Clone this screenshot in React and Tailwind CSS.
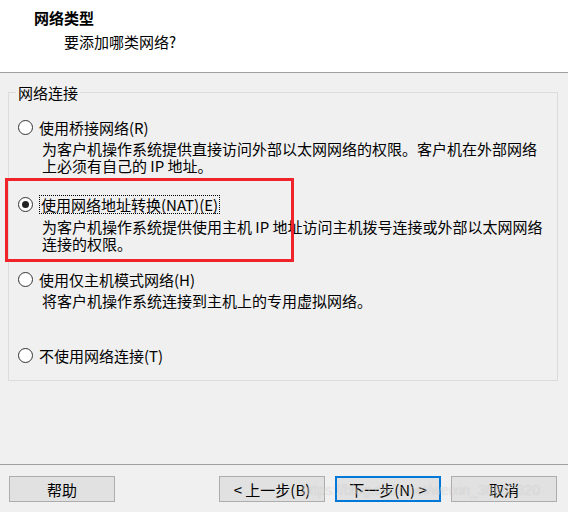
const OPTIONS = [
    {
        key: 'bridged',
        label: '使用桥接网络(R)',
        lines: ['为客户机操作系统提供直接访问外部以太网网络的权限。客户机在外部网络', '上必须有自己的 IP 地址。'],
    },
    {
        key: 'nat',
        label: '使用网络地址转换(NAT)(E)',
        lines: ['为客户机操作系统提供使用主机 IP 地址访问主机拨号连接或外部以太网网络', '连接的权限。'],
        checked: true,
    },
    {
        key: 'hostonly',
        label: '使用仅主机模式网络(H)',
        lines: ['将客户机操作系统连接到主机上的专用虚拟网络。'],
    },
    {
        key: 'none',
        label: '不使用网络连接(T)',
        lines: [],
    },
]

function Radio({ checked }) {
    return (
        <span className="flex h-[15px] w-[15px] shrink-0 items-center justify-center rounded-full border border-[#333] bg-white">
            {checked && <span className="h-[7px] w-[7px] rounded-full bg-[#222]" />}
        </span>
    )
}

function Option({ option, last }) {
    return (
        <div className={last ? '' : 'h-[76px]'}>
            <div className="flex items-center gap-[6px] leading-[17px]">
                <Radio checked={option.checked} />
                <span className={option.checked ? 'border border-dotted border-black px-[1px] leading-[17px]' : 'leading-[17px]'}>
                    {option.label}
                </span>
            </div>
            {option.lines.length > 0 && (
                <div className="mt-[4px] pl-[24px] leading-[17px]">
                    {option.lines.map((line) => (
                        <div key={line}>{line}</div>
                    ))}
                </div>
            )}
        </div>
    )
}

function Button({ children, primary }) {
    return (
        <button
            type="button"
            className={`h-[26px] w-[106px] bg-[#e1e1e1] text-[15px] leading-[17px] text-black ${primary ? 'border-2 border-[#0078d7]' : 'border border-[#adadad]'
                }`}
        >
            {children}
        </button>
    )
}

export default function App() {
    return (
        <div
            className="relative flex h-[512px] w-[568px] flex-col overflow-hidden bg-[#f0f0f0] text-[15px] text-black"
            style={{ fontFamily: '"Noto Sans CJK SC", "Noto Sans", sans-serif' }}
        >
            <div className="h-[73px] border-b border-[#a0a0a0] bg-white pl-[34px] pt-[9px] leading-[17px]">
                <div className="font-bold">网络类型</div>
                <div className="mt-[7px] pl-[30px]">要添加哪类网络?</div>
            </div>

            <div className="flex-1">
                <fieldset className="ml-[8px] mt-[11px] w-[550px] border border-[#dcdcdc] pb-[16px]">
                    <legend className="ml-[7px] px-[2px] leading-[17px]">网络连接</legend>
                    <div className="mt-[18px] pl-[9px]">
                        {OPTIONS.map((option, i) => (
                            <Option key={option.key} option={option} last={i === OPTIONS.length - 1} />
                        ))}
                    </div>
                </fieldset>
            </div>

            <div className="flex h-[48px] items-start border-t border-[#a0a0a0] pl-[9px] pr-[11px] pt-[11px]">
                <Button>帮助</Button>
                <div className="ml-auto flex gap-[10px]">
                    <Button>&lt; 上一步(B)</Button>
                    <Button primary>下一步(N) &gt;</Button>
                    <Button>取消</Button>
                </div>
            </div>

            {/* annotation box */}
            <div className="absolute left-[5px] top-[178px] h-[84px] w-[289px] border-[3px] border-[#f0232b]" />

            {/* watermark */}
            <div
                className="pointer-events-none absolute left-[302px] top-[481px] text-[14px] leading-[18px] text-white/40 [text-shadow:0_0_1px_rgba(0,0,0,0.15)]"
                style={{ fontFamily: '"Liberation Sans", sans-serif' }}
            >
                https://blog.csdn.net/weixin_38867320
            </div>
        </div>
    )
}
